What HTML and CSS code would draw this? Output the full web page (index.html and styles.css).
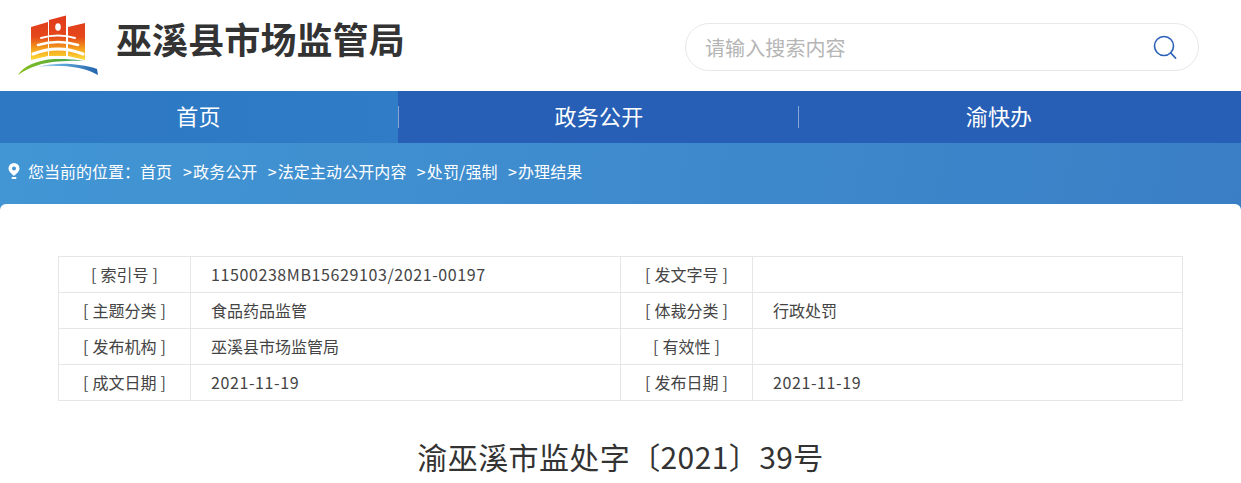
FILE: index.html
```html
<!DOCTYPE html>
<html lang="zh-CN">
<head>
<meta charset="utf-8">
<title>巫溪县市场监管局</title>
<link rel="stylesheet" href="styles.css">
</head>
<body>
<header class="top">
  <a class="brand" href="#">
    <svg class="logo" width="82" height="62" viewBox="0 0 82 62" aria-hidden="true">
      <defs>
        <linearGradient id="fire" gradientUnits="userSpaceOnUse" x1="0" y1="0" x2="0" y2="44">
          <stop offset="0" stop-color="#e0391b"/>
          <stop offset=".5" stop-color="#e5481b"/>
          <stop offset=".75" stop-color="#f39a1c"/>
          <stop offset="1" stop-color="#fcd835"/>
        </linearGradient>
        <linearGradient id="green" x1="0" y1="0" x2="1" y2="0">
          <stop offset="0" stop-color="#8cc020"/>
          <stop offset=".6" stop-color="#55ab3a"/>
          <stop offset="1" stop-color="#3aa070"/>
        </linearGradient>
        <linearGradient id="blue" x1="0" y1="0" x2="1" y2="0">
          <stop offset="0" stop-color="#cfe6f4"/>
          <stop offset=".4" stop-color="#5fa8d8"/>
          <stop offset="1" stop-color="#2363ab"/>
        </linearGradient>
      </defs>
      <path fill="url(#fire)" d="M14 12 31 7V41L14 45Z"/>
      <path fill="url(#fire)" d="M32 5 49 .5V41H32Z"/>
      <path fill="url(#fire)" d="M51 12 68 8V45L51 41Z"/>
      <ellipse cx="41" cy="12" rx="2.800" ry="3.800" fill="#fff"/>
      <g fill="none" stroke="#fff" stroke-linecap="round">
        <path stroke-width="1" d="M31.500 21V44M50 21V44"/>
        <path stroke-width="2" d="M24 23Q41 18 58 23"/>
        <path stroke-width="2.600" d="M21 30Q41 24 61 30"/>
        <path stroke-width="3.200" d="M16 39Q41 29 66 39"/>
      </g>
      <path fill="url(#green)" d="M1 60C7 50 24 44 41 44 50 44 60 44.500 67 46 58 45.500 50 46 41 46.500 26 47.500 12 52 1 60Z"/>
      <path fill="url(#blue)" d="M20 52C34 48 50 48 62 50 70 51 76 52 80 54L81 60C72 55 60 51.500 44 51 36 50.700 28 51 20 52Z"/>
    </svg>
    <h1 class="site-name">巫溪县市场监管局</h1>
  </a>
  <form class="search">
    <input class="search-input" type="text" placeholder="请输入搜索内容">
    <svg class="search-icon" width="24" height="24" viewBox="0 0 24 24" aria-hidden="true">
      <circle cx="11" cy="11" r="9.500" fill="none" stroke="#2b62b6" stroke-width="1.600"/>
      <path d="M17.800 18 22.500 23" fill="none" stroke="#2b62b6" stroke-width="1.800" stroke-linecap="round"/>
    </svg>
  </form>
</header>

<nav class="nav">
  <div class="nav-inner">
    <a class="nav-item is-active" href="#">首页</a>
    <a class="nav-item" href="#">政务公开</a>
    <a class="nav-item nav-last" href="#">渝快办</a>
  </div>
</nav>

<div class="crumbs">
  <svg class="pin" width="12" height="16" viewBox="0 0 12 16" aria-hidden="true">
    <path fill-rule="evenodd" fill="#fff" d="M6 0A5.500 5.500 0 0 1 11.500 5.500C11.500 8.500 8 11 6 13 4 11 .5 8.500 .5 5.500A5.500 5.500 0 0 1 6 0ZM6 3.500A2 2 0 1 0 6 7.500 2 2 0 0 0 6 3.500Z"/>
    <rect x="3.500" y="14" width="5" height="2" rx="1" fill="#fff"/>
  </svg>
  <span class="here">您当前的位置<span class="colon">：</span>首页</span>
  <a class="crumb" href="#"><span class="gt">&gt;</span>政务公开</a>
  <a class="crumb" href="#"><span class="gt">&gt;</span>法定主动公开内容</a>
  <a class="crumb" href="#"><span class="gt">&gt;</span>处罚/强制</a>
  <a class="crumb" href="#"><span class="gt">&gt;</span>办理结果</a>
</div>

<main class="card">
  <table class="meta">
    <tbody>
      <tr><th>[ 索引号 ]</th><td class="num">11500238MB15629103/2021-00197</td><th>[ 发文字号 ]</th><td></td></tr>
      <tr><th>[ 主题分类 ]</th><td>食品药品监管</td><th>[ 体裁分类 ]</th><td>行政处罚</td></tr>
      <tr><th>[ 发布机构 ]</th><td>巫溪县市场监管局</td><th>[ 有效性 ]</th><td></td></tr>
      <tr><th>[ 成文日期 ]</th><td class="num">2021-11-19</td><th>[ 发布日期 ]</th><td class="num">2021-11-19</td></tr>
    </tbody>
  </table>
  <h2 class="doc-title">渝巫溪市监处字〔2021〕39号</h2>
</main>
</body>
</html>
```
FILE: styles.css
```css
* { box-sizing: border-box; }
html, body { margin: 0; padding: 0; height: 483px; overflow: hidden; }
body {
  background: #fff;
  color: #333;
  font-family: "Noto Sans CJK SC", "Noto Sans", sans-serif;
}
a { color: inherit; text-decoration: none; }

.top {
  height: 91px;
  display: flex;
  justify-content: space-between;
  align-items: flex-start;
  padding: 23px 42px 0 17px;
}
.brand { display: flex; align-items: flex-start; }
.logo { margin-top: -8px; flex: none; }
.site-name {
  margin: -6px 0 0 17px;
  font-size: 36px;
  line-height: 42px;
  font-weight: 700;
  letter-spacing: .1px;
  color: #333;
  white-space: nowrap;
}
.search {
  width: 514px;
  height: 48px;
  border: 1px solid #e8e8e8;
  border-radius: 24px;
  display: flex;
  align-items: center;
  padding: 0 21px 0 19px;
}
.search-input {
  flex: 1;
  border: 0;
  outline: 0;
  background: none;
  font: 20px "Noto Sans CJK SC", sans-serif;
  letter-spacing: .1px;
  color: #333;
  padding: 0;
}
.search-input::placeholder { color: #b5b5b5; opacity: 1; }

.nav { height: 52px; background: #275fb6; }
.nav-inner { display: flex; width: 1200px; height: 100%; margin-left: -1px; }
.nav-item {
  position: relative;
  flex: 0 0 400px;
  display: flex;
  align-items: center;
  justify-content: center;
  padding-bottom: 4px;
  color: #fff;
  font-size: 22px;
  letter-spacing: .2px;
}
.nav-item::after {
  content: "";
  position: absolute;
  right: 0;
  top: 15px;
  height: 22px;
  width: 1px;
  background: rgba(255, 255, 255, .45);
}
.nav-last::after { display: none; }
.nav-item.is-active { flex-basis: 399px; margin-right: 1px; background: linear-gradient(90deg, #2d77c3, #307cc6); }
.nav-item.is-active::after { right: -1px; }

.crumbs {
  height: 67px;
  padding: 0 0 12px 8px;
  display: flex;
  align-items: center;
  gap: 10px;
  color: #fff;
  font-size: 16px;
  background: linear-gradient(100deg, #4296d4, #3a7fc5);
}
.pin { margin-right: -2px; flex: none; }
.here { margin-right: 1px; }
.colon { font-family: "Noto Sans CJK TC", sans-serif; }
.crumb { letter-spacing: .1px; margin-right: .3px; }
.gt { display: inline-block; width: 10px; }

.card {
  margin-top: -6px;
  padding-top: 52px;
  background: #fff;
  border-radius: 6px 6px 0 0;
}
.meta {
  margin: 0 59px 0 58px;
  width: 1124px;
  table-layout: fixed;
  border-collapse: collapse;
  font-size: 16px;
  color: #444;
}
.meta th, .meta td {
  height: 36px;
  padding: 0 0 2px;
  border: 1px solid #e6e6e6;
  line-height: 20px;
  font-weight: 400;
}
.meta th { width: 132px; text-align: center; word-spacing: .5px; }
.meta td { width: 430px; padding-left: 20px; }
.meta td.num { letter-spacing: .6px; }
.doc-title {
  margin: 32px 0 0;
  text-align: center;
  font-size: 30px;
  line-height: 46px;
  font-weight: 400;
  letter-spacing: .4px;
  color: #333;
}
```
